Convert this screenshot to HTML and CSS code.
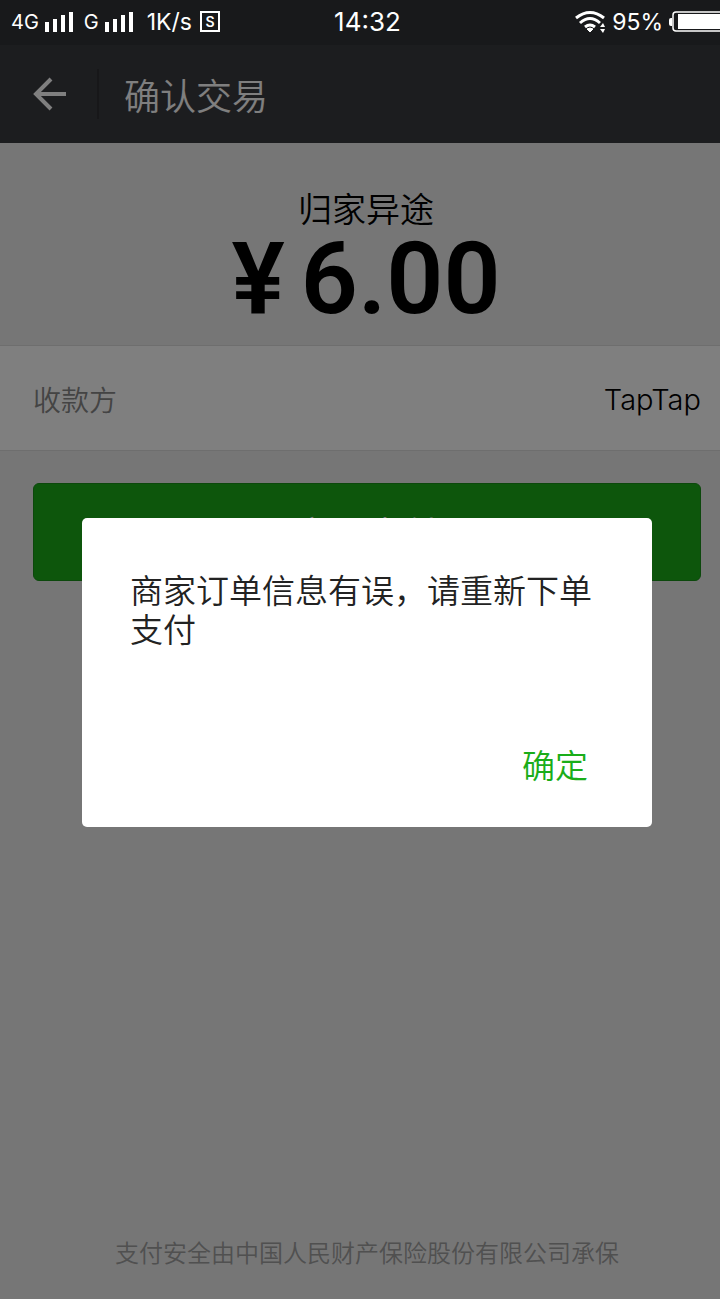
FILE: index.html
```
<!DOCTYPE html>
<html lang="zh-CN">

<head>
  <meta charset="UTF-8" />
  <meta name="viewport" content="width=device-width, initial-scale=1" />
  <title>确认交易</title>
  <link rel="stylesheet" href="styles.css">
</head>

<body>
  <div class="status-bar">
    <div class="status-left">
      <span class="network">4G</span>
      <svg class="signal" width="28" height="20" viewBox="0 0 28 20" fill="currentColor" aria-hidden="true">
        <path d="M0 10h4v10H0zM8 7h4v13H8zM16 3h4v17h-4zM24 0h4v20h-4z" />
      </svg>
      <span class="network second">G</span>
      <svg class="signal" width="28" height="20" viewBox="0 0 28 20" fill="currentColor" aria-hidden="true">
        <path d="M0 10h4v10H0zM8 7h4v13H8zM16 3h4v17h-4zM24 0h4v20h-4z" />
      </svg>
      <span class="speed">1K/s</span>
      <span class="sim">S</span>
    </div>
    <time class="clock">14:32</time>
    <div class="status-right">
      <svg width="32" height="24" viewBox="0 0 32 24" fill="none" stroke="currentColor" stroke-width="3" aria-hidden="true">
        <path d="M2 8Q16 -3 30 8M6 13Q16 4 26 13M11 17Q16 13 21 17" />
        <path d="M13 19Q16 17 19 19L16 22Z" fill="currentColor" stroke-width="1" />
        <path d="M29 13l2 4h-5zM29 23l2-4h-5z" fill="currentColor" stroke="none" />
      </svg>
      <span class="percent">95%</span>
      <svg class="battery" width="51" height="22" viewBox="0 0 51 22" aria-hidden="true">
        <path d="M3 7H2Q0 7 0 9v4q0 2 2 2h1z" fill="currentColor" />
        <rect x="4" y="1" width="56" height="19" rx="3" fill="none" stroke="currentColor" stroke-width="1.5" />
        <path d="M9 3h42v15H9z" fill="currentColor" />
      </svg>
    </div>
  </div>

  <header class="header">
    <button class="back" type="button" aria-label="返回">
      <svg width="33" height="34" viewBox="0 0 33 34" fill="none" stroke="currentColor" stroke-width="4" aria-hidden="true">
        <path d="M18 2L3 17l15 15M3 17h30" />
      </svg>
    </button>
    <h1 class="title">确认交易</h1>
  </header>

  <main class="page">
    <section class="order">
      <h2 class="goods">归家异途</h2>
      <p class="amount"><span>¥</span><span>6.00</span></p>
    </section>

    <dl class="payee">
      <dt>收款方</dt>
      <dd>TapTap</dd>
    </dl>

    <button class="pay-btn" type="button">立即支付</button>

    <p class="insurance">支付安全由中国人民财产保险股份有限公司承保</p>
  </main>

  <div class="mask">
    <div class="dialog" role="alertdialog" aria-modal="true" aria-describedby="message">
      <p class="message" id="message">商家订单信息有误，请重新下单支付</p>
      <button class="confirm" type="button">确定</button>
    </div>
  </div>
</body>

</html>
```
FILE: styles.css
```
* {
  box-sizing: border-box;
}

body {
  margin: 0;
  min-height: 100vh;
  display: flex;
  flex-direction: column;
  background: #ededed;
  color: #000;
  font-family: Inter, "Noto Sans CJK SC", sans-serif;
  overflow-x: hidden;
}

h1,
h2,
p,
dl,
dd {
  margin: 0;
  font-weight: 400;
}

button {
  border: none;
  background: none;
  padding: 0;
  font-family: inherit;
  cursor: pointer;
}

/* status bar, stays above the mask */
.status-bar {
  position: relative;
  z-index: 20;
  display: grid;
  grid-template-columns: 1fr auto 1fr;
  align-items: center;
  height: 45px;
  padding: 0 0 2px 11px;
  background: #18191b;
  color: #fff;
  font-size: 23px;
}

.status-left,
.status-right {
  display: flex;
  align-items: center;
}

.status-right {
  justify-content: flex-end;
}

.network {
  font-size: 20px;
}

.signal {
  margin-left: 6px;
}

.second {
  margin-left: 11px;
}

.speed {
  margin-left: 14px;
}

.sim {
  display: flex;
  align-items: center;
  justify-content: center;
  width: 20px;
  height: 21px;
  margin-left: 8px;
  border: 2px solid #fff;
  font-size: 14px;
  font-weight: 600;
}

.clock {
  padding-left: 4px;
  font-size: 26px;
}

.percent {
  margin: 0 6px;
}

/* title bar */
.header {
  display: flex;
  align-items: center;
  height: 98px;
  background: #393a3f;
  color: #fff;
}

.back {
  display: flex;
  align-items: center;
  width: 99px;
  height: 50px;
  padding-left: 33px;
  border-right: 2px solid #2e2f33;
  color: #fff;
}

.title {
  margin-left: 25px;
  font-size: 36px;
  font-weight: 350;
}

/* content */
.page {
  flex: 1;
  display: flex;
  flex-direction: column;
}

.order {
  padding: 43px 0 21px 12px;
  text-align: center;
}

.goods {
  font-size: 34px;
  font-weight: 350;
  line-height: 48px;
}

.amount {
  display: flex;
  justify-content: center;
  gap: 16px;
  font-family: Roboto, sans-serif;
  font-size: 100px;
  font-weight: 600;
  line-height: 90px;
}

.payee {
  display: flex;
  align-items: center;
  justify-content: space-between;
  height: 106px;
  padding: 2px 19px 0 33px;
  border: solid #dcdcdc;
  border-width: 1px 0;
  background: #fff;
}

.payee dt {
  color: #888;
  font-size: 28px;
  font-weight: 350;
}

.payee dd {
  font-size: 29px;
  font-weight: 300;
}

.pay-btn {
  height: 98px;
  margin: 32px 19px 0 33px;
  border: 1px solid #199018;
  border-radius: 6px;
  background: #1aad19;
  color: #fff;
  font-size: 36px;
  font-weight: 350;
}

.insurance {
  margin-top: auto;
  padding: 0 0 27px 14px;
  color: #a0a0a0;
  font-size: 24px;
  font-weight: 350;
  line-height: 36px;
  text-align: center;
}

/* alert */
.mask {
  position: fixed;
  inset: 45px 0 0;
  z-index: 10;
  display: flex;
  align-items: center;
  justify-content: center;
  padding-left: 14px;
  background: rgba(0, 0, 0, 0.5);
}

.dialog {
  display: flex;
  flex-direction: column;
  gap: 92px;
  width: 81%;
  max-width: 570px;
  padding: 54px 48px 37px;
  border-radius: 5px;
  background: #fff;
}

.message {
  color: #222;
  font-size: 33px;
  font-weight: 350;
  line-height: 39px;
}

.confirm {
  align-self: flex-end;
  margin-right: 16px;
  color: #1aad19;
  font-size: 33px;
  font-weight: 350;
  line-height: 48px;
}
```
